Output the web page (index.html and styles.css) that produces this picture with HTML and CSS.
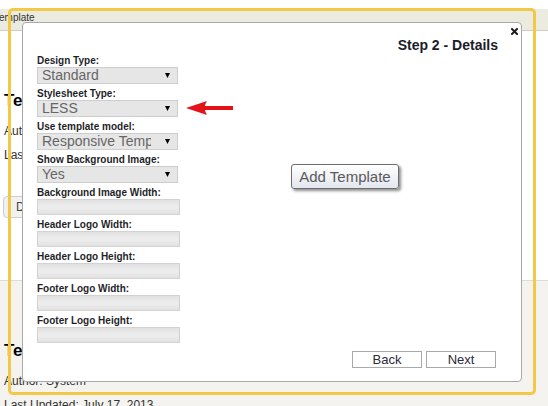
FILE: index.html
```html
<!DOCTYPE html>
<html>
<head>
<meta charset="utf-8">
<title>Add Template</title>
<link rel="stylesheet" href="styles.css">
</head>
<body>
  <div class="page">
    <div class="tabbar"><span class="tab">Template</span></div>
    <section class="tpl">
      <h2>Template Gallery</h2>
      <p>Author: System</p>
      <p>Last Updated: July 17, 2013</p>
      <button class="btn-old">Download</button>
    </section>
    <section class="tpl alt">
      <h2>Template Basic</h2>
      <p>Author: System</p>
      <p>Last Updated: July 17, 2013</p>
      <button class="btn-old">Download</button>
    </section>
  </div>

  <div class="frame"></div>

  <div class="modal">
    <button class="close" aria-label="Close">
      <svg viewBox="0 0 7 7" width="7" height="7"><path d="M1 1 L6 6 M6 1 L1 6" stroke="#1e1e1e" stroke-width="2" stroke-linecap="square"/></svg>
    </button>
    <h3 class="title">Step 2 - Details</h3>
    <div class="body">
      <div class="fields">
        <div class="field">
          <label>Design Type:</label>
          <div class="select"><span>Standard</span><svg viewBox="0 0 5 5"><polygon points="0,0 5,0 2.5,5" fill="#000"/></svg></div>
        </div>
        <div class="field">
          <label>Stylesheet Type:</label>
          <div class="select"><span>LESS</span><svg viewBox="0 0 5 5"><polygon points="0,0 5,0 2.5,5" fill="#000"/></svg></div>
        </div>
        <div class="field">
          <label>Use template model:</label>
          <div class="select"><span>Responsive Template</span><svg viewBox="0 0 5 5"><polygon points="0,0 5,0 2.5,5" fill="#000"/></svg></div>
        </div>
        <div class="field">
          <label>Show Background Image:</label>
          <div class="select"><span>Yes</span><svg viewBox="0 0 5 5"><polygon points="0,0 5,0 2.5,5" fill="#000"/></svg></div>
        </div>
        <div class="field">
          <label>Background Image Width:</label>
          <input class="text" type="text">
        </div>
        <div class="field">
          <label>Header Logo Width:</label>
          <input class="text" type="text">
        </div>
        <div class="field">
          <label>Header Logo Height:</label>
          <input class="text" type="text">
        </div>
        <div class="field">
          <label>Footer Logo Width:</label>
          <input class="text" type="text">
        </div>
        <div class="field">
          <label>Footer Logo Height:</label>
          <input class="text" type="text">
        </div>
      </div>
      <div class="preview">
        <button class="add">Add Template</button>
      </div>
    </div>
    <div class="footer">
      <button class="nav">Back</button>
      <button class="nav">Next</button>
    </div>
  </div>

  <svg class="pointer" viewBox="0 0 48 16" width="48" height="16">
    <path d="M0 8 L21 1 Q19 4 19 6 L47 6 L47 10 L19 10 Q19 12 21 15 Z" fill="#e5121a"/>
  </svg>
</body>
</html>
```

FILE: styles.css
```css
body {
  margin: 0;
  font-family: "Liberation Sans", Arial, sans-serif;
  background: #fff;
  color: #222;
  overflow: hidden;
}

.tabbar {
  margin-top: 9px;
  height: 21px;
  background: #ecebdf;
  border-bottom: 1px solid #cfcdc2;
  font-size: 10px;
  line-height: 17px;
  white-space: nowrap;
  overflow: hidden;
}

.tab {
  display: inline-block;
  margin-left: -6px;
  color: #333;
}

.tpl {
  padding: 60px 0 62px 4px;
}

.tpl h2 {
  margin: 0;
  font-size: 17px;
  line-height: 20px;
  font-weight: bold;
  color: #000;
}

.tpl p {
  margin: 0;
  font-size: 12px;
  line-height: 24px;
  color: #333;
}

.tpl h2 + p {
  margin-top: 8px;
}

.btn-old {
  margin: 29px 0 0 -1px;
  height: 22px;
  padding: 0 10px 0 12px;
  border: 1px solid #cfcfcf;
  border-radius: 4px;
  background: #f1f1f1;
  font-family: "Liberation Sans", Arial, sans-serif;
  font-size: 12px;
  color: #444;
}

.alt {
  background: #f4f3ef;
  border-top: 1px solid #dcdbd5;
}

.frame {
  position: absolute;
  left: 8px;
  top: 8px;
  width: 528px;
  height: 387px;
  box-sizing: border-box;
  border: 3px solid #f3c846;
  border-radius: 5px;
}

.modal {
  position: absolute;
  left: 22px;
  top: 22px;
  width: 500px;
  height: 360px;
  box-sizing: border-box;
  border: 1px solid #a8a8a8;
  border-radius: 4px;
  background: #fff;
  display: flex;
  flex-direction: column;
  padding: 14px 23px 13px 14px;
}

.close {
  position: absolute;
  right: 3px;
  top: 5px;
  width: 7px;
  height: 7px;
  padding: 0;
  border: 0;
  background: none;
  display: block;
}

.close svg {
  display: block;
}

.title {
  margin: 0;
  text-align: right;
  font-size: 14px;
  line-height: 16px;
  font-weight: bold;
  color: #1c1c2a;
}

.body {
  flex: 1;
  display: flex;
  margin-top: 2px;
}

.fields {
  width: 143px;
  display: flex;
  flex-direction: column;
  gap: 4px;
}

.field label {
  display: block;
  font-size: 10px;
  line-height: 12px;
  font-weight: bold;
  color: #1f1f2a;
  white-space: nowrap;
}

.select {
  width: 141px;
  height: 17px;
  box-sizing: border-box;
  border: 1px solid #cdcdcd;
  background: #e6e6e6;
  display: flex;
  align-items: center;
  padding-left: 4px;
  font-size: 14px;
  color: #666;
}

.select span {
  flex: 1;
  overflow: hidden;
  white-space: nowrap;
  line-height: 15px;
}

.select svg {
  width: 5px;
  height: 5px;
  margin: 0 7px 0 14px;
  flex: none;
}

.text {
  display: block;
  width: 143px;
  height: 16px;
  box-sizing: border-box;
  margin: 0;
  padding: 0;
  border: 1px solid #d2d2d2;
  background: linear-gradient(#e2e2e2, #ededed 50%, #e2e2e2);
}

.preview {
  flex: 1;
  display: flex;
  align-items: flex-start;
}

.add {
  margin: 109px 0 0 111px;
  width: 108px;
  height: 25px;
  padding: 0;
  border: 1px solid #6e6e6e;
  border-radius: 3px;
  background: linear-gradient(#ffffff, #e3e6ef);
  box-shadow: 2px 2px 3px rgba(0, 0, 0, 0.45);
  font-family: "Liberation Sans", Arial, sans-serif;
  font-size: 15px;
  color: #5a5a5a;
}

.footer {
  display: flex;
  justify-content: flex-end;
  gap: 4px;
  margin-right: 2px;
}

.nav {
  width: 70px;
  height: 17px;
  padding: 0;
  border: 1px solid #a9a9a9;
  background: #fff;
  font-family: "Liberation Sans", Arial, sans-serif;
  font-size: 13px;
  line-height: 15px;
  color: #2a2a3a;
}

.pointer {
  position: absolute;
  left: 186px;
  top: 100px;
}
```
